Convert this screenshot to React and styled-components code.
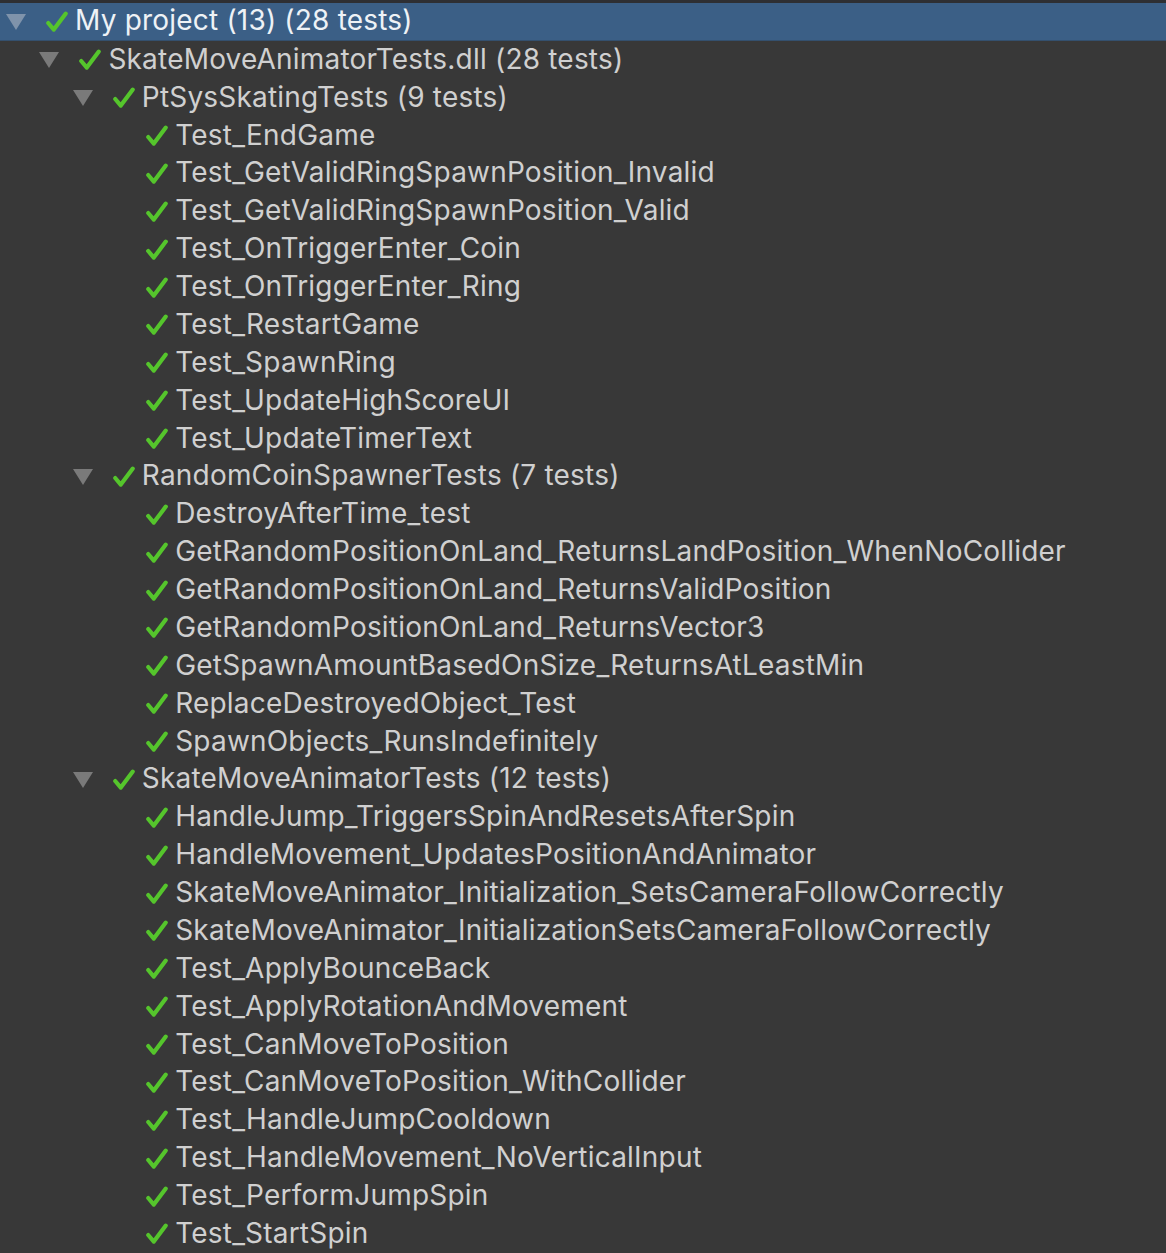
import React from "react";
import styled, { createGlobalStyle } from "styled-components";

const GlobalStyle = createGlobalStyle`
    html, body {
        margin: 0;
        padding: 0;
        background: #383838;
    }
    body {
        font-family: Inter, "Noto Sans", "Liberation Sans", sans-serif;
    }
`;

const tree = {
    name: "My project (13) (28 tests)",
    children: [
        {
            name: "SkateMoveAnimatorTests.dll (28 tests)",
            children: [
                {
                    name: "PtSysSkatingTests (9 tests)",
                    children: [
                        "Test_EndGame",
                        "Test_GetValidRingSpawnPosition_Invalid",
                        "Test_GetValidRingSpawnPosition_Valid",
                        "Test_OnTriggerEnter_Coin",
                        "Test_OnTriggerEnter_Ring",
                        "Test_RestartGame",
                        "Test_SpawnRing",
                        "Test_UpdateHighScoreUI",
                        "Test_UpdateTimerText",
                    ],
                },
                {
                    name: "RandomCoinSpawnerTests (7 tests)",
                    children: [
                        "DestroyAfterTime_test",
                        "GetRandomPositionOnLand_ReturnsLandPosition_WhenNoCollider",
                        "GetRandomPositionOnLand_ReturnsValidPosition",
                        "GetRandomPositionOnLand_ReturnsVector3",
                        "GetSpawnAmountBasedOnSize_ReturnsAtLeastMin",
                        "ReplaceDestroyedObject_Test",
                        "SpawnObjects_RunsIndefinitely",
                    ],
                },
                {
                    name: "SkateMoveAnimatorTests (12 tests)",
                    children: [
                        "HandleJump_TriggersSpinAndResetsAfterSpin",
                        "HandleMovement_UpdatesPositionAndAnimator",
                        "SkateMoveAnimator_Initialization_SetsCameraFollowCorrectly",
                        "SkateMoveAnimator_InitializationSetsCameraFollowCorrectly",
                        "Test_ApplyBounceBack",
                        "Test_ApplyRotationAndMovement",
                        "Test_CanMoveToPosition",
                        "Test_CanMoveToPosition_WithCollider",
                        "Test_HandleJumpCooldown",
                        "Test_HandleMovement_NoVerticalInput",
                        "Test_PerformJumpSpin",
                        "Test_StartSpin",
                    ],
                },
            ],
        },
    ],
};

function flatten(node, level, out) {
    if (typeof node === "string") {
        out.push({ name: node, level, leaf: true });
        return out;
    }
    out.push({ name: node.name, level, leaf: false });
    node.children.forEach((c) => flatten(c, level + 1, out));
    return out;
}

const CheckIcon = () => (
    <svg width="24" height="24" viewBox="0 0 24 24">
        <path
            d="M3.2 13 L8.8 19.6 L20.8 3.6"
            fill="none"
            stroke="#55c52c"
            strokeWidth="4.2"
            strokeLinecap="round"
            strokeLinejoin="round"
        />
    </svg>
);

export default function App() {
    const rows = flatten(tree, 0, []);
    return (
        <Panel>
            <GlobalStyle />
            {rows.map((r, i) => (
                <Row key={i} $selected={i === 0}>
                    <Indent $level={r.level} />
                    <Toggle>{!r.leaf && <Arrow $selected={i === 0} />}</Toggle>
                    <Check>
                        <CheckIcon />
                    </Check>
                    <Label $selected={i === 0}>{r.name}</Label>
                </Row>
            ))}
        </Panel>
    );
}

const Panel = styled.div`
    background: #383838;
    border-top: 3px solid #2e2f33;
    min-height: 1250px;
    overflow: hidden;
`;

const Row = styled.div`
    display: flex;
    align-items: center;
    height: 37.875px;
    box-sizing: border-box;
    background: ${(p) => (p.$selected ? "#3b5f86" : "transparent")};
    border-bottom: ${(p) => (p.$selected ? "1px solid #34506e" : "none")};
    white-space: nowrap;
`;

const Indent = styled.div`
    flex: none;
    width: ${(p) => 6 + p.$level * 33.4}px;
`;

const Toggle = styled.div`
    flex: none;
    width: 40px;
    height: 100%;
    display: flex;
    align-items: center;
`;

const Arrow = styled.div`
    width: 0;
    height: 0;
    border-left: 10px solid transparent;
    border-right: 10px solid transparent;
    border-top: 16px solid ${(p) => (p.$selected ? "#7f93ab" : "#7a7a7a")};
    margin-top: 1px;
`;

const Check = styled.div`
    flex: none;
    width: 30px;
    margin-left: -1px;
    display: flex;
    align-items: center;
    margin-top: 1px;
`;

const Label = styled.span`
    font-size: 28px;
    letter-spacing: 0.2px;
    color: ${(p) => (p.$selected ? "#eef2f6" : "#d0d0d0")};
    line-height: 1;
    margin-top: -2px;
`;
